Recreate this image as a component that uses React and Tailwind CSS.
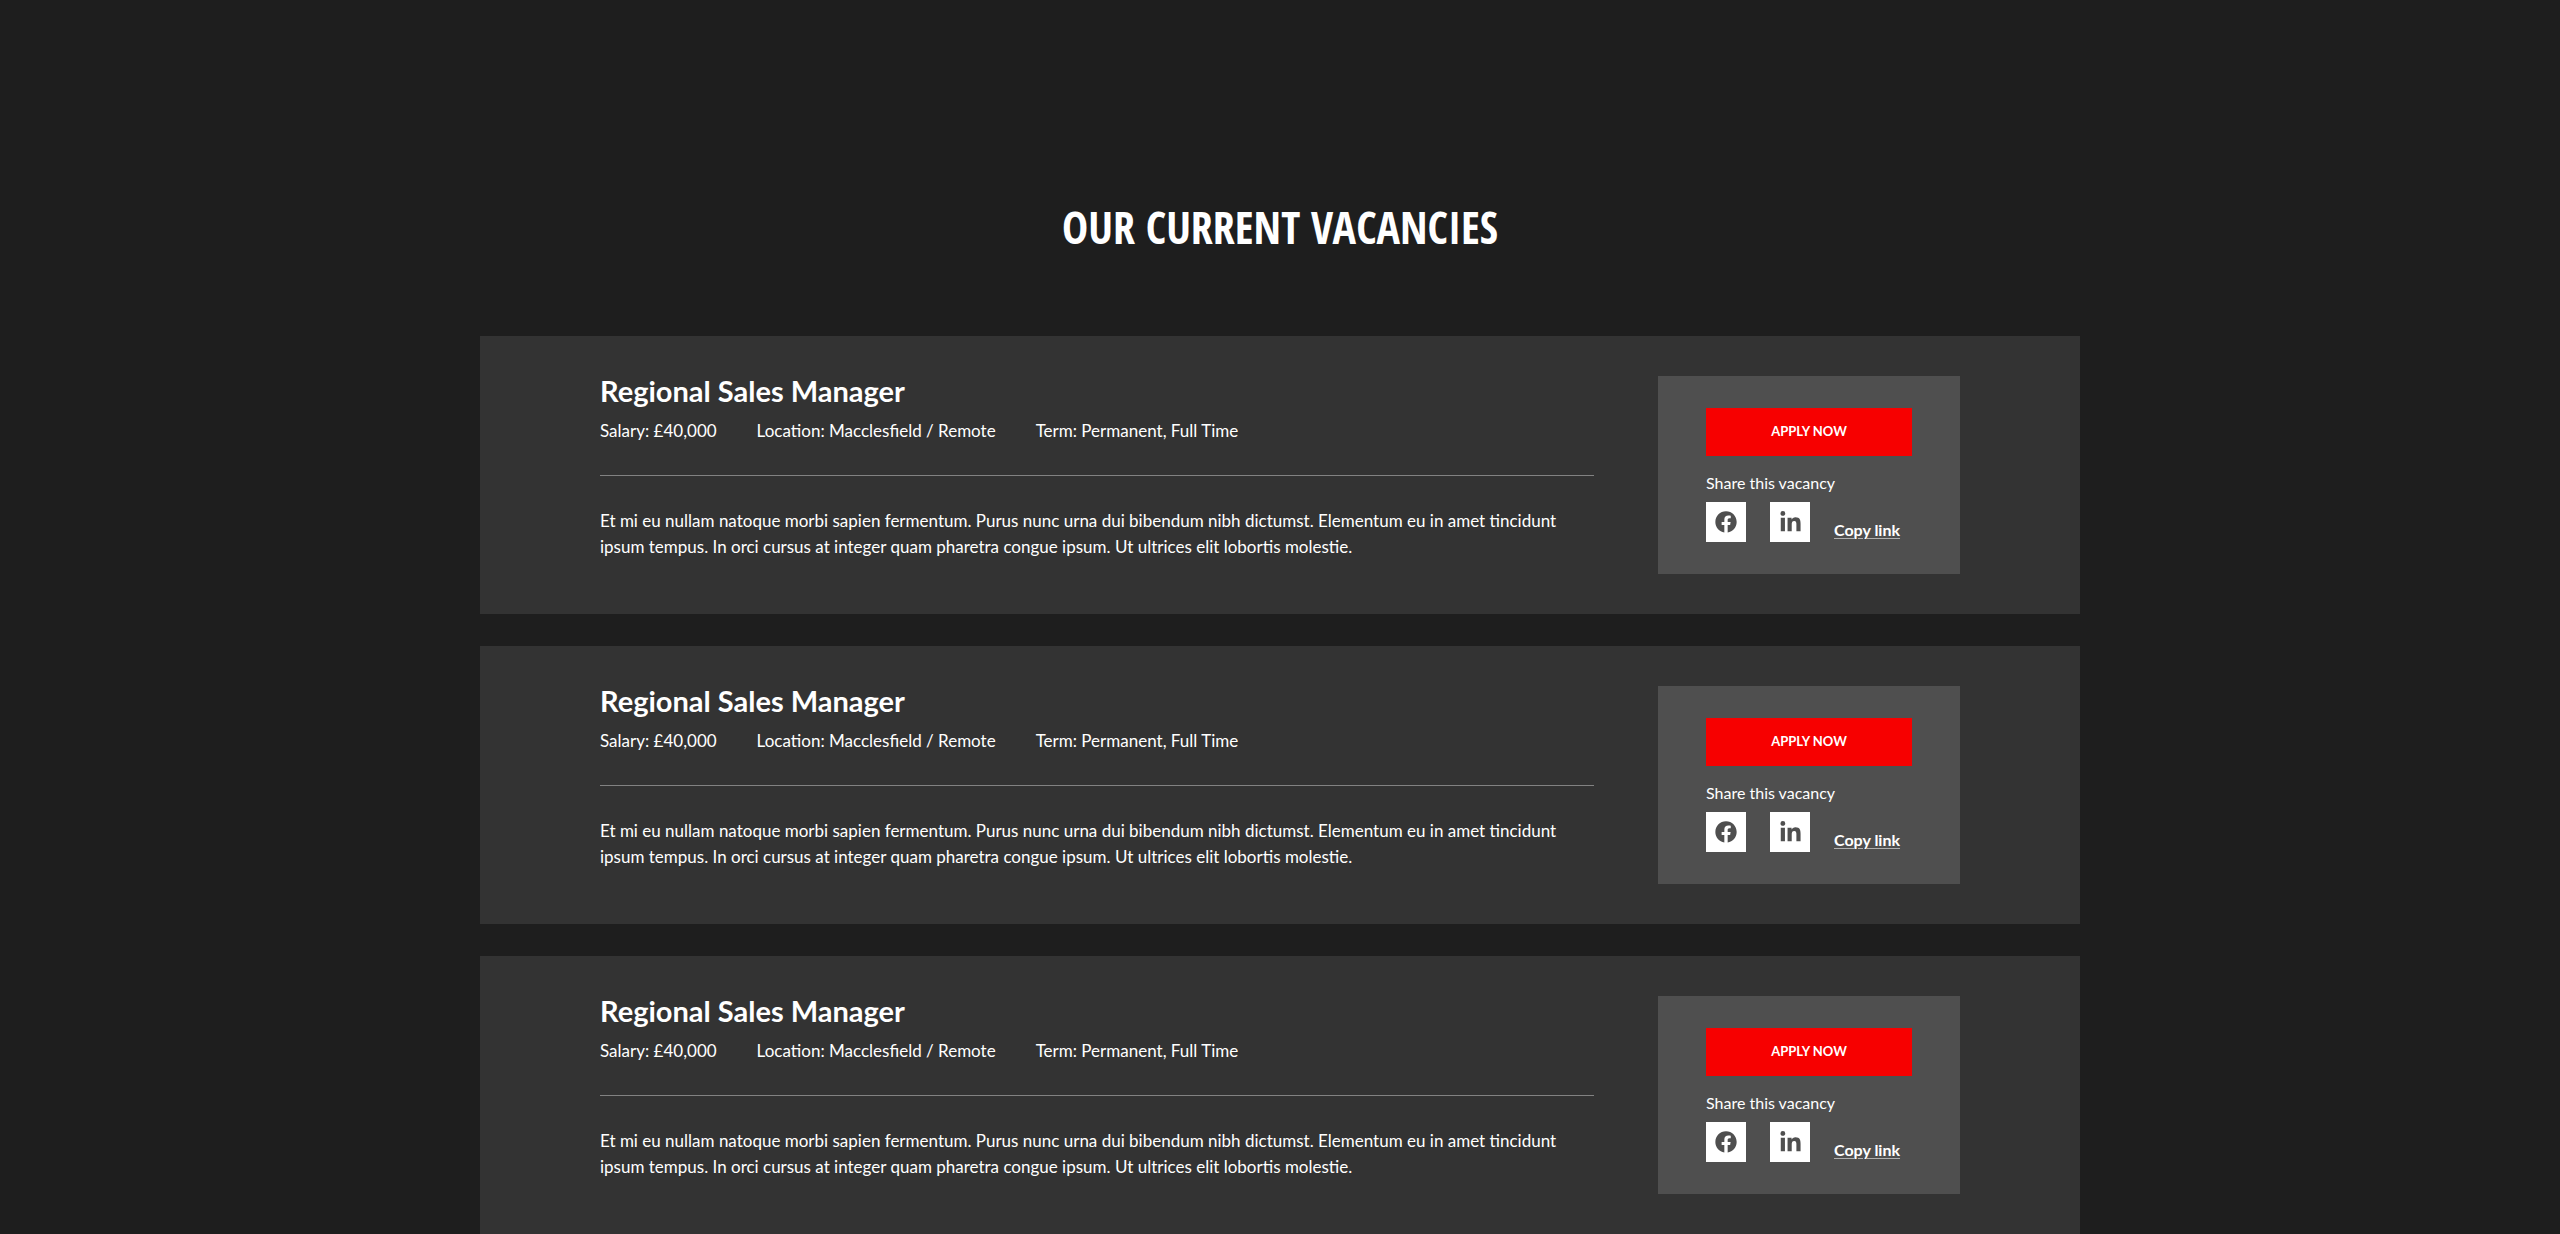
import { FaFacebook, FaLinkedinIn } from "react-icons/fa";

const vacancies = [1, 2, 3].map((id) => ({
  id,
  title: "Regional Sales Manager",
  salary: "£40,000",
  location: "Macclesfield / Remote",
  term: "Permanent, Full Time",
  description:
    "Et mi eu nullam natoque morbi sapien fermentum. Purus nunc urna dui bibendum nibh dictumst. Elementum eu in amet tincidunt ipsum tempus. In orci cursus at integer quam pharetra congue ipsum. Ut ultrices elit lobortis molestie.",
}));

const ShareLink = ({ label, children }) => (
  <a
    href="#"
    aria-label={label}
    className="flex size-10 items-center justify-center bg-white text-[#4f4f4f]"
  >
    {children}
  </a>
);

const VacancyCard = ({ vacancy }) => {
  return (
    <article className="flex flex-col gap-8 bg-[#333333] px-6 py-10 lg:flex-row lg:gap-16 lg:px-[120px]">
      <div className="min-w-0 flex-1">
        <h2 className="text-[29px] leading-[30px] font-bold">{vacancy.title}</h2>
        <ul className="mt-3 flex flex-wrap gap-x-10 border-b border-[#828282] pb-[31px] text-[17px] leading-[26px]">
          <li>Salary: {vacancy.salary}</li>
          <li>Location: {vacancy.location}</li>
          <li>Term: {vacancy.term}</li>
        </ul>
        <p className="mt-8 text-[17px] leading-[26px]">{vacancy.description}</p>
      </div>

      <div className="bg-[#4f4f4f] px-12 py-8 lg:w-[302px]">
        <button
          type="button"
          className="h-12 w-full bg-[#f70000] text-[13px] font-bold uppercase"
        >
          Apply now
        </button>
        <p className="mt-4 text-base leading-[22px]">Share this vacancy</p>
        <div className="mt-2 flex items-end gap-6">
          <ShareLink label="Share on Facebook">
            <FaFacebook size={22} />
          </ShareLink>
          <ShareLink label="Share on LinkedIn">
            <FaLinkedinIn size={23} />
          </ShareLink>
          <button
            type="button"
            className="text-base leading-6 font-bold whitespace-nowrap underline decoration-[#b0b0b0] decoration-1 underline-offset-2"
          >
            Copy link
          </button>
        </div>
      </div>
    </article>
  );
};

const App = () => {
  return (
    <main className="min-h-screen bg-[#1e1e1e] font-['Lato',sans-serif] text-white">
      <section className="mx-auto max-w-[1600px] pt-[198px]">
        <h1 className="text-center font-['Open_Sans_Condensed','Open_Sans',sans-serif] text-[44px] leading-[58px] font-bold uppercase">
          Our current vacancies
        </h1>
        <div className="mt-20 flex flex-col gap-8">
          {vacancies.map((vacancy) => (
            <VacancyCard key={vacancy.id} vacancy={vacancy} />
          ))}
        </div>
      </section>
    </main>
  );
};

export default App;
